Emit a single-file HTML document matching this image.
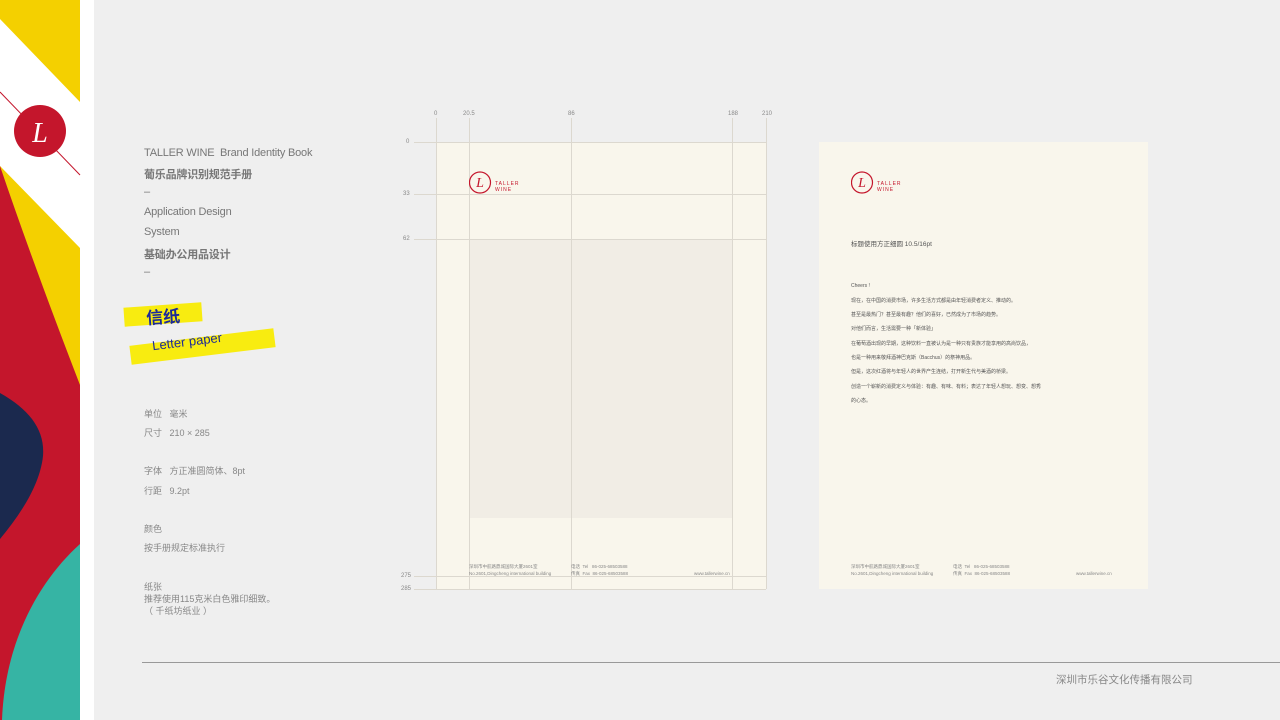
<!DOCTYPE html>
<html><head><meta charset="utf-8"><style>
*{margin:0;padding:0;box-sizing:border-box}
body{width:1280px;height:720px;background:#efefef;position:relative;overflow:hidden;font-family:"Liberation Sans","Noto Sans CJK SC",sans-serif;color:#6a6a6a}
.a{position:absolute;white-space:nowrap}
.t{font-size:11px;color:#777;letter-spacing:-0.2px}
.s{font-size:9px;color:#888}
.rl{font-size:6px;color:#888}
.ln{position:absolute;background:#dcd8cf}
.f{font-size:4.5px;color:#888}
.b{font-size:5px;color:#555}
</style></head><body>
<svg class="a" style="left:0;top:0" width="94" height="720">
<rect width="94" height="720" fill="#fff"/>
<rect width="80" height="720" fill="#f4d000"/>
<polygon points="0,19 80,102 80,248 0,166" fill="#fff"/>
<path d="M0,166 C25,240 55,320 80,385 L80,720 L0,720Z" fill="#c4162c"/>
<path d="M0,393 C30,410 45,430 43,456 C40,485 20,515 0,539Z" fill="#1b294e"/>
<path d="M80,544 C40,580 5,640 2,720 L80,720Z" fill="#36b4a4"/>
<line x1="0" y1="92" x2="80" y2="175" stroke="#c4162c" stroke-width="1"/>
<circle cx="40" cy="131" r="26" fill="#c4162c"/>
<text x="40" y="142" text-anchor="middle" font-family="Liberation Serif,serif" font-style="italic" font-size="28" fill="#fff">L</text>
</svg>
<div class="a t" style="left:144px;top:147px">TALLER WINE&nbsp; Brand Identity Book</div>
<div class="a t" style="left:144px;top:166px;font-weight:bold">葡乐品牌识别规范手册</div>
<div class="a t" style="left:144px;top:186px">–</div>
<div class="a t" style="left:144px;top:206px">Application Design</div>
<div class="a t" style="left:144px;top:226px">System</div>
<div class="a t" style="left:144px;top:246px;font-weight:bold">基础办公用品设计</div>
<div class="a t" style="left:144px;top:266px">–</div>
<div class="a" style="left:124px;top:305px;width:78px;height:19px;background:#f8ec10;transform:rotate(-4deg)"></div>
<div class="a" style="left:146px;top:303px;font-size:17px;font-weight:bold;color:#1c2a9a;transform:rotate(-4deg)">信纸</div>
<div class="a" style="left:130px;top:337px;width:145px;height:19px;background:#f8ec10;transform:rotate(-7deg)"></div>
<div class="a" style="left:152px;top:334px;font-size:13px;color:#1c2a9a;transform:rotate(-7deg)">Letter paper</div>
<div class="a s" style="left:144px;top:407px">单位&nbsp;&nbsp; 毫米</div>
<div class="a s" style="left:144px;top:426px">尺寸&nbsp;&nbsp; 210 × 285</div>
<div class="a s" style="left:144px;top:464px">字体&nbsp;&nbsp; 方正准圆简体、8pt</div>
<div class="a s" style="left:144px;top:484px">行距&nbsp;&nbsp; 9.2pt</div>
<div class="a s" style="left:144px;top:522px">颜色</div>
<div class="a s" style="left:144px;top:541px">按手册规定标准执行</div>
<div class="a s" style="left:144px;top:580px">纸张</div>
<div class="a s" style="left:144px;top:592px">推荐使用115克米白色雅印细致。</div>
<div class="a s" style="left:144px;top:604px">（ 千纸坊纸业 ）</div>

<div class="a" style="left:436px;top:142px;width:330px;height:447px;background:#f9f6ec"></div>
<div class="a" style="left:469px;top:239px;width:263px;height:279px;background:#f1ede5"></div>
<div class="ln" style="left:436px;top:118px;width:1px;height:471px"></div>
<div class="ln" style="left:469px;top:118px;width:1px;height:471px"></div>
<div class="ln" style="left:571px;top:118px;width:1px;height:471px"></div>
<div class="ln" style="left:732px;top:118px;width:1px;height:471px"></div>
<div class="ln" style="left:766px;top:118px;width:1px;height:471px"></div>
<div class="ln" style="left:414px;top:142px;width:352px;height:1px"></div>
<div class="ln" style="left:414px;top:194px;width:352px;height:1px"></div>
<div class="ln" style="left:414px;top:239px;width:352px;height:1px"></div>
<div class="ln" style="left:414px;top:576px;width:352px;height:1px"></div>
<div class="ln" style="left:414px;top:589px;width:352px;height:1px"></div>
<div class="a rl" style="left:434px;top:111px">0</div>
<div class="a rl" style="left:463px;top:111px">20.5</div>
<div class="a rl" style="left:568px;top:111px">86</div>
<div class="a rl" style="left:728px;top:111px">188</div>
<div class="a rl" style="left:762px;top:111px">210</div>
<div class="a rl" style="left:406px;top:139px">0</div>
<div class="a rl" style="left:403px;top:191px">33</div>
<div class="a rl" style="left:403px;top:236px">62</div>
<div class="a rl" style="left:401px;top:573px">275</div>
<div class="a rl" style="left:401px;top:586px">285</div>
<svg class="a" style="left:469px;top:171px" width="50" height="24"><circle cx="11" cy="11.5" r="10.5" fill="none" stroke="#c4162c" stroke-width="1.2"/><text x="11" y="16" text-anchor="middle" font-family="Liberation Serif,serif" font-style="italic" font-size="14" fill="#c4162c">L</text><text x="26" y="14" font-size="5" fill="#c4162c" letter-spacing="1">TALLER</text><text x="26" y="20" font-size="5" fill="#c4162c" letter-spacing="1">WINE</text></svg>
<div class="a f" style="left:469px;top:564px">深圳市中航路鼎城国际大厦2601室</div>
<div class="a f" style="left:469px;top:571px">No.2601,Dingcheng international building</div>
<div class="a f" style="left:571px;top:564px">电话&nbsp; Tel&nbsp;&nbsp; 86-025-68503588</div>
<div class="a f" style="left:571px;top:571px">传真&nbsp; Fax&nbsp; 86-025-68503588</div>
<div class="a f" style="left:694px;top:571px">www.tallerwine.cn</div>

<div class="a" style="left:819px;top:142px;width:329px;height:447px;background:#f9f6ec"></div>
<svg class="a" style="left:851px;top:171px" width="50" height="24"><circle cx="11" cy="11.5" r="10.5" fill="none" stroke="#c4162c" stroke-width="1.2"/><text x="11" y="16" text-anchor="middle" font-family="Liberation Serif,serif" font-style="italic" font-size="14" fill="#c4162c">L</text><text x="26" y="14" font-size="5" fill="#c4162c" letter-spacing="1">TALLER</text><text x="26" y="20" font-size="5" fill="#c4162c" letter-spacing="1">WINE</text></svg>
<div class="a" style="left:851px;top:238px;font-size:6.5px;color:#555">标题使用方正细圆 10.5/16pt</div>
<div class="a b" style="left:851px;top:283px">Cheers !</div>
<div class="a b" style="left:851px;top:297px">现在，在中国的消费市场，许多生活方式都是由年轻消费者定义、推动的。</div>
<div class="a b" style="left:851px;top:311px">甚至是最热门？甚至最有趣？他们的喜好，已然成为了市场的趋势。</div>
<div class="a b" style="left:851px;top:325px">对他们而言，生活需要一种「新体验」</div>
<div class="a b" style="left:851px;top:340px">在葡萄酒出现的早期，这种饮料一直被认为是一种只有贵族才能享用的高尚饮品，</div>
<div class="a b" style="left:851px;top:354px">也是一种用来敬拜酒神巴克斯（Bacchus）的祭神用品。</div>
<div class="a b" style="left:851px;top:368px">但是，这次红酒将与年轻人的世界产生连结，打开新生代与美酒的桥梁。</div>
<div class="a b" style="left:851px;top:383px">创造一个崭新的消费定义与体验：有趣、有味、有料；表达了年轻人想玩、想变、想秀</div>
<div class="a b" style="left:851px;top:397px">的心态。</div>
<div class="a f" style="left:851px;top:564px">深圳市中航路鼎城国际大厦2601室</div>
<div class="a f" style="left:851px;top:571px">No.2601,Dingcheng international building</div>
<div class="a f" style="left:953px;top:564px">电话&nbsp; Tel&nbsp;&nbsp; 86-025-68503588</div>
<div class="a f" style="left:953px;top:571px">传真&nbsp; Fax&nbsp; 86-025-68503588</div>
<div class="a f" style="left:1076px;top:571px">www.tallerwine.cn</div>

<div class="a" style="left:142px;top:662px;width:1138px;height:1px;background:#999"></div>
<div class="a" style="left:1056px;top:672px;font-size:10.5px;color:#888">深圳市乐谷文化传播有限公司</div>
</body></html>
